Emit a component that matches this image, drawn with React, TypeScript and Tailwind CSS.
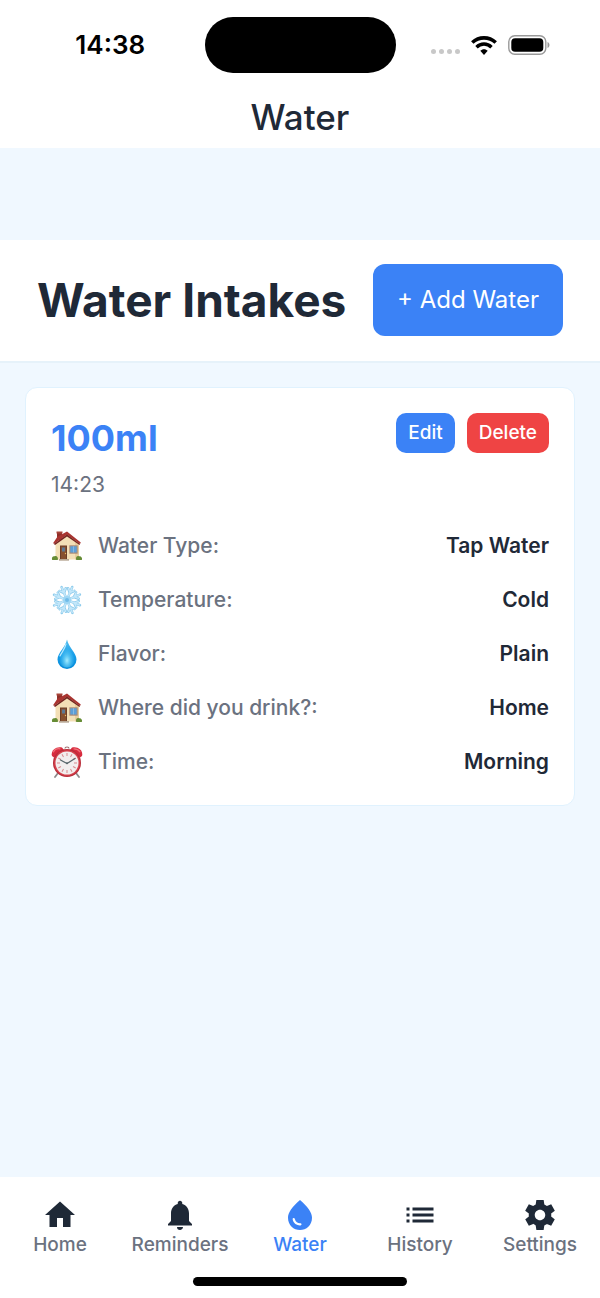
import type { ReactNode } from 'react';
import {
  MdHome,
  MdList,
  MdNotifications,
  MdWaterDrop,
} from 'react-icons/md';

interface Detail {
  id: string;
  icon: ReactNode;
  label: string;
  value: string;
}

interface Intake {
  id: number;
  amount: string;
  time: string;
  details: Detail[];
}

interface IconProps {
  size?: number;
  className?: string;
}

// Sharp-cornered gear, the icon package only has the rounded one
function GearIcon({ size = 24, className }: IconProps) {
  return (
    <svg
      viewBox="0 0 24 24"
      width={size}
      height={size}
      fill="currentColor"
      className={className}
      aria-hidden="true"
    >
      <path d="M19.44 12.99l-.01.02c.04-.33.08-.67.08-1.01 0-.34-.03-.66-.07-.99l.01.02 2.44-1.92-2.43-4.22-2.87 1.16.01.01c-.52-.4-1.09-.74-1.71-1h.01L14.44 2H9.57l-.44 3.07h.01c-.62.26-1.19.6-1.71 1l.01-.01-2.88-1.17-2.44 4.22 2.44 1.92.01-.02c-.04.33-.07.65-.07.99 0 .34.03.68.08 1.01l-.01-.02-2.1 1.65-.33.26 2.43 4.2 2.88-1.15-.02-.04c.53.41 1.1.75 1.73 1.01h-.03L9.58 22h4.85s.03-.18.06-.42l.38-2.65h-.01c.62-.26 1.2-.6 1.73-1.01l-.02.04 2.88 1.15 2.43-4.2s-.14-.12-.33-.26l-2.11-1.66zM12 15.5c-1.93 0-3.5-1.57-3.5-3.5s1.57-3.5 3.5-3.5 3.5 1.57 3.5 3.5-1.57 3.5-3.5 3.5z" />
    </svg>
  );
}

function HouseIcon() {
  return (
    <svg viewBox="0 0 32 32" className="size-8" aria-hidden="true">
      <path d="M6 2h5v8H6z" fill="#8f2f28" />
      <path d="M5.5 1.5h6v2h-6z" fill="#a8453a" />
      <path d="M4.5 13 16 4.5 28 13v16.5H4.5z" fill="#f3dfb6" />
      <path d="M24 11.5 28 14v15.5h-4z" fill="#e8cd9d" />
      <path d="m2.2 13 4.2-6.2L16 1.5l13.800 11-.8 1.5L16 4.800 3 14z" fill="#a93430" />
      <path d="m3 14 13-9.500 13 9.500-.5 1L16 6.500 4 15z" fill="#74231f" />
      <path d="M9 15.500h7v14H9z" fill="#6b3d29" />
      <path d="M10 16.500h5V29h-5z" fill="#87502f" />
      <path d="M11 17.500h3v4h-3z" fill="#5d7894" />
      <circle cx="14.5" cy="23.5" r=".7" fill="#e6bb64" />
      <path d="M18.300 15.300h8.400v8.400h-8.400z" fill="#a88a78" />
      <path d="M19.300 16.300h6.400v6.200h-6.400z" fill="#5d9fd8" />
      <path d="M22.200 16.300h.6v6.200h-.6z" fill="#a5c9e4" />
      <path d="M8 29h10v1.700H8z" fill="#b8a895" />
      <path d="M1.200 30c-1-3 .8-4.200 2.400-3.800C6 25.500 7.500 28 6.800 30z" fill="#668c35" />
      <path d="M25.200 30c-.7-2.500.6-4.300 2.600-3.800 2.200-.4 4 1.600 3 3.800z" fill="#668c35" />
    </svg>
  );
}

function SnowflakeIcon() {
  const angles = [22, 67, 112, 157, 202, 247, 292, 337];

  return (
    <svg viewBox="0 0 32 32" className="size-8" aria-hidden="true">
      {angles.map((angle) => (
        <g key={angle} transform={`rotate(${angle} 16 16)`} fill="none" strokeLinecap="round">
          <path
            d="M16 15V2M16 8.500l-3.400-3.800M16 8.500l3.400-3.800"
            stroke="#8bcaeb"
            strokeWidth="2.500"
          />
          <path
            d="M16 14V2.500M16 8l-3-3.200M16 8l3-3.200"
            stroke="#c3e7fa"
            strokeWidth="1.500"
          />
        </g>
      ))}
      <circle cx="16" cy="16" r="4" fill="#9ed6f4" />
      <circle cx="16" cy="16" r="2" fill="#6fbbe8" />
    </svg>
  );
}

function DropletIcon() {
  return (
    <svg viewBox="0 0 32 32" className="size-8" aria-hidden="true">
      <defs>
        <linearGradient id="drop-fill" x1="0" y1="0" x2="0" y2="1">
          <stop offset="0" stopColor="#54bff0" />
          <stop offset=".55" stopColor="#159ce8" />
          <stop offset="1" stopColor="#078bd8" />
        </linearGradient>
        <radialGradient id="drop-light" cx=".5" cy=".7" r=".55">
          <stop offset="0" stopColor="#a7edff" />
          <stop offset="1" stopColor="#43c6f8" stopOpacity="0" />
        </radialGradient>
      </defs>
      <path
        d="M16 1.500C14.500 9 6.500 15 6.500 21.500a9.500 9.500 0 0 0 19 0C25.500 15 17.500 9 16 1.500z"
        fill="url(#drop-fill)"
      />
      <path
        d="M16 6c-1.500 7-7.500 10.500-7.500 16a7.500 7.500 0 0 0 15 0C23.500 16.500 17.500 13 16 6z"
        fill="url(#drop-light)"
      />
      <path
        d="M15 6c-1 5-4.500 8.500-6 12"
        stroke="#b9eaff"
        strokeWidth="1.200"
        strokeLinecap="round"
        fill="none"
      />
    </svg>
  );
}

function AlarmClockIcon() {
  const ticks = [0, 30, 60, 90, 120, 150, 180, 210, 240, 270, 300, 330];

  return (
    <svg viewBox="0 0 32 32" className="size-8" aria-hidden="true">
      <path d="m7 27-3 4M25 27l3 4" stroke="#8e8a8b" strokeWidth="1.800" strokeLinecap="round" />
      <path d="M14 2.500c0-2 4-2 4 0" stroke="#9d6c6d" strokeWidth="1.200" fill="none" />
      <path d="M1 10C-.5 4.500 5 0 11 1.500l2 2.500L3 11.500z" fill="#d72b3e" />
      <path d="M31 10C32.500 4.500 27 0 21 1.500L19 4l10 7.500z" fill="#d72b3e" />
      <path
        d="M2.500 6c1-2.500 4-3.500 6.500-3.200M23 2.800c2.500 0 4.500 1 6 3"
        stroke="#f06f78"
        strokeWidth="1.200"
        strokeLinecap="round"
        fill="none"
      />
      <circle cx="16" cy="17" r="14" fill="#b92d3a" />
      <circle cx="16" cy="17" r="12.800" fill="#d8444f" />
      <circle cx="16" cy="17" r="11.500" fill="#f2eeee" />
      {ticks.map((angle) => (
        <path
          key={angle}
          d="M16 7v3"
          stroke="#d7898d"
          strokeWidth="1"
          transform={`rotate(${angle} 16 17)`}
        />
      ))}
      <path
        d="m9.500 14 6.500 3.500 8-5"
        stroke="#59676c"
        strokeWidth="1.300"
        strokeLinecap="round"
        strokeLinejoin="round"
        fill="none"
      />
      <circle cx="16" cy="17.200" r="1" fill="#59676c" />
    </svg>
  );
}

const intakes: Intake[] = [
  {
    id: 1,
    amount: '100ml',
    time: '14:23',
    details: [
      { id: 'type', icon: <HouseIcon />, label: 'Water Type:', value: 'Tap Water' },
      { id: 'temperature', icon: <SnowflakeIcon />, label: 'Temperature:', value: 'Cold' },
      { id: 'flavor', icon: <DropletIcon />, label: 'Flavor:', value: 'Plain' },
      { id: 'place', icon: <HouseIcon />, label: 'Where did you drink?:', value: 'Home' },
      { id: 'time', icon: <AlarmClockIcon />, label: 'Time:', value: 'Morning' },
    ],
  },
];

const tabs = [
  { name: 'Home', Icon: MdHome },
  { name: 'Reminders', Icon: MdNotifications },
  { name: 'Water', Icon: MdWaterDrop },
  { name: 'History', Icon: MdList },
  { name: 'Settings', Icon: GearIcon },
];

function StatusBar() {
  return (
    <div className="grid h-[90px] grid-cols-[1fr_191px_1fr] items-center text-black">
      <span className="pl-4 text-center text-[26px] leading-8 font-semibold">14:38</span>
      <div className="h-14 rounded-full bg-black" />
      <div className="flex items-center justify-end gap-[11px] pr-[50px]">
        <div className="flex gap-[3px] pt-3">
          <span className="size-[5px] rounded-full bg-[#c8c8c8]" />
          <span className="size-[5px] rounded-full bg-[#c8c8c8]" />
          <span className="size-[5px] rounded-full bg-[#c8c8c8]" />
          <span className="size-[5px] rounded-full bg-[#c8c8c8]" />
        </div>
        <svg viewBox="0 0 26 19" className="h-[19px] w-[26px]" role="img" aria-label="Wi-Fi">
          <path
            d="M1.300 6.500C8 .3 18 .3 24.700 6.500"
            stroke="currentColor"
            strokeWidth="3.600"
            fill="none"
          />
          <path
            d="M5.500 11.200c4.200-4.200 10.800-4.200 15 0"
            stroke="currentColor"
            strokeWidth="3.400"
            fill="none"
          />
          <path d="M9.300 14.800c2-2.200 5.400-2.200 7.400 0L13 19z" fill="currentColor" />
        </svg>
        <svg viewBox="0 0 42 20" className="h-5 w-[42px]" role="img" aria-label="Battery">
          <rect
            x=".8"
            y=".8"
            width="37"
            height="18.400"
            rx="6"
            fill="none"
            stroke="#999"
            strokeWidth="1.400"
          />
          <rect x="3.300" y="3.300" width="32" height="13.400" rx="3.800" fill="currentColor" />
          <path d="M39.500 7c2.600 1 2.600 5 0 6z" fill="#999" />
        </svg>
      </div>
    </div>
  );
}

function IntakeCard({ intake }: { intake: Intake }) {
  return (
    <article className="rounded-xl border border-[#e0f2fe] bg-white px-[25px] pt-[25px] pb-4">
      <div className="mb-5 flex items-start justify-between">
        <div>
          <h3 className="pt-1 text-[36px] leading-[42px] font-bold text-[#3b82f6]">
            {intake.amount}
          </h3>
          <p className="mt-3 text-[21px] leading-7 text-[#6b7280]">{intake.time}</p>
        </div>
        <div className="flex gap-3 text-[19px] leading-6 font-medium text-white">
          <button type="button" className="rounded-[10px] bg-[#3b82f6] px-3 py-2">
            Edit
          </button>
          <button type="button" className="rounded-[10px] bg-[#ef4444] px-3 py-2">
            Delete
          </button>
        </div>
      </div>
      <dl>
        {intake.details.map((detail) => (
          <div key={detail.id} className="flex h-[54px] items-center">
            {detail.icon}
            <dt className="ml-[15px] flex-1 text-[21px] leading-7 font-medium text-[#6b7280]">
              {detail.label}
            </dt>
            <dd className="text-[21px] leading-7 font-semibold text-[#1f2937]">
              {detail.value}
            </dd>
          </div>
        ))}
      </dl>
    </article>
  );
}

function TabBar({ active }: { active: string }) {
  return (
    <footer className="bg-white">
      <nav className="grid grid-cols-5 pt-5">
        {tabs.map(({ name, Icon }) => (
          <a
            key={name}
            href={`#${name.toLowerCase()}`}
            aria-current={name === active ? 'page' : undefined}
            className={`flex flex-col items-center text-[19px] leading-6 font-medium ${
              name === active ? 'text-[#3b82f6]' : 'text-[#6b7280]'
            }`}
          >
            <Icon size={36} className={name === active ? 'text-[#3b82f6]' : 'text-[#1f2937]'} />
            {name}
          </a>
        ))}
      </nav>
      <div className="mx-auto mt-5 mb-3 h-[9px] w-[214px] rounded-full bg-black" />
    </footer>
  );
}

export default function App() {
  return (
    <div className="flex min-h-screen flex-col bg-[#f0f8ff] font-['Inter',sans-serif]">
      <header className="bg-white">
        <StatusBar />
        <h1 className="pt-[3px] pb-[7px] text-center text-[35px] leading-[48px] font-medium text-[#1f2937]">
          Water
        </h1>
      </header>
      <main className="flex-1 pt-[92px]">
        <div className="flex items-center justify-between border-b-2 border-[#e6f2fa] bg-white px-[37px] pt-6 pb-[25px]">
          <h2 className="text-[46px] leading-[56px] font-bold whitespace-nowrap text-[#1f2937]">
            Water Intakes
          </h2>
          <button
            type="button"
            className="rounded-xl bg-[#3b82f6] px-6 py-5 text-[24px] leading-8 whitespace-nowrap text-white"
          >
            + Add Water
          </button>
        </div>
        <div className="space-y-4 px-[25px] py-6">
          {intakes.map((intake) => (
            <IntakeCard key={intake.id} intake={intake} />
          ))}
        </div>
      </main>
      <TabBar active="Water" />
    </div>
  );
}
